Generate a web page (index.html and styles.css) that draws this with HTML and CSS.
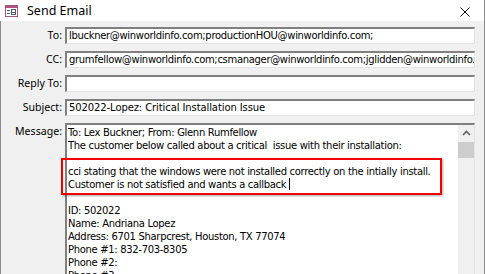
FILE: index.html
```html
<!DOCTYPE html>
<html>
<head>
<meta charset="utf-8">
<link rel="stylesheet" href="styles.css">
</head>
<body>
<div class="window">
  <div class="titlebar">
    <svg class="ticon" width="13" height="12" viewBox="0 0 13 12">
      <rect x="0.5" y="0.5" width="12" height="11" fill="#fff" stroke="#a0587c"/>
      <rect x="1" y="1" width="11" height="2" fill="#b4527e"/>
      <rect x="2" y="5" width="3" height="1" fill="#4a5a7a"/>
      <rect x="2" y="8" width="3" height="1" fill="#4a5a7a"/>
      <rect x="6.5" y="4.5" width="4" height="5" fill="#fff" stroke="#4a5a7a"/>
      <rect x="7" y="7" width="3" height="1" fill="#4a5a7a"/>
    </svg>
    <span class="ttext">Send Email</span>
    <svg class="close" width="10" height="10" viewBox="0 0 10 10">
      <path d="M0.5 0.5 L9.5 9.5 M9.5 0.5 L0.5 9.5" stroke="#111" stroke-width="1" fill="none"/>
    </svg>
  </div>
  <div class="body">
    <div class="form">
      <label class="lbl">To:</label>
      <div class="field">lbuckner@winworldinfo.com;productionHOU@winworldinfo.com;</div>
      <label class="lbl">CC:</label>
      <div class="field">grumfellow@winworldinfo.com;csmanager@winworldinfo.com;jglidden@winworldinfo.com</div>
      <label class="lbl">Reply To:</label>
      <div class="field"></div>
      <label class="lbl">Subject:</label>
      <div class="field subj">502022-Lopez: Critical Installation Issue</div>
      <label class="lbl">Message:</label>
      <div class="field msg">
        <div class="msgtext">
          <div class="ln">To: Lex Buckner; From: Glenn Rumfellow</div>
          <div class="ln">The customer below called about a critical&nbsp; issue with their installation:</div>
          <div class="ln">&nbsp;</div>
          <div class="ln">cci stating that the windows were not installed correctly on the intially install.</div>
          <div class="ln">Customer is not satisfied and wants a callback <span class="caret"></span></div>
          <div class="ln">&nbsp;</div>
          <div class="ln">ID: 502022</div>
          <div class="ln">Name: Andriana Lopez</div>
          <div class="ln">Address: 6701 Sharpcrest, Houston, TX 77074</div>
          <div class="ln">Phone #1: 832-703-8305</div>
          <div class="ln">Phone #2:</div>
          <div class="ln">Phone #3:</div>
        </div>
        <div class="scroll">
          <svg class="up" width="9" height="6" viewBox="0 0 9 6">
            <path d="M1 5 L4.5 1.5 L8 5" stroke="#606060" stroke-width="1.6" fill="none"/>
          </svg>
          <div class="thumb"></div>
        </div>
      </div>
    </div>
    <div class="highlight"></div>
  </div>
</div>
</body>
</html>
```
FILE: styles.css
```css
html, body {
  margin: 0;
  padding: 0;
  width: 485px;
  height: 274px;
  overflow: hidden;
  background: #f0f0f0;
}
.window {
  width: 485px;
  height: 274px;
  box-sizing: border-box;
  border-right: 1px solid #8a8a8a;
  display: flex;
  flex-direction: column;
  font-family: "Noto Sans", "Open Sans", sans-serif;
}
.titlebar {
  height: 21px;
  flex: none;
  background: #fff;
  display: flex;
  align-items: center;
  padding-left: 5px;
  padding-right: 14px;
}
.ticon { flex: none; margin-top: 1px; }
.ttext {
  margin-left: 9px;
  font-size: 12.5px;
  color: #000;
  flex: 1;
}
.close { flex: none; margin-top: 2px; }
.body {
  position: relative;
  flex: 1;
  border-left: 1px solid #8a8a8a;
  background: #f0f0f0;
  padding: 6px 9px 0 0;
  overflow: hidden;
}
.form {
  display: grid;
  grid-template-columns: 64px 410px;
  grid-auto-rows: 17px;
  row-gap: 7px;
}
.lbl {
  text-align: right;
  padding-right: 3px;
  font-size: 10.6px;
  line-height: 17px;
  color: #000;
}
.field {
  background: #fff;
  border-top: 2px solid #808080;
  border-left: 2px solid #808080;
  border-right: 1px solid #e3e3e3;
  border-bottom: 1px solid #e3e3e3;
  box-sizing: border-box;
  font-family: "DejaVu Sans", sans-serif;
  font-size: 10px;
  letter-spacing: -0.32px;
  line-height: 14px;
  padding-left: 2px;
  white-space: nowrap;
  overflow: hidden;
  color: #000;
}
.subj { letter-spacing: -0.1px; }
.msg {
  height: 200px;
  display: flex;
  padding-left: 1px;
  border-bottom: none;
}
.msgtext {
  flex: 1;
  padding-top: 1px;
  line-height: 13px;
  overflow: hidden;
}
.ln { white-space: nowrap; }
.caret {
  display: inline-block;
  width: 1px;
  height: 12px;
  background: #000;
  vertical-align: -2px;
}
.scroll {
  width: 16px;
  flex: none;
  background: #f0f0f0;
  display: flex;
  flex-direction: column;
  align-items: center;
}
.up { margin-top: 5px; }
.thumb {
  margin-top: 6px;
  width: 16px;
  height: 16px;
  background: #cdcdcd;
}
.highlight {
  position: absolute;
  left: 60px;
  top: 137px;
  width: 377px;
  height: 33px;
  border: 2px solid #f00000;
  box-shadow: 1px 1px 2px rgba(0,0,0,0.35);
}
```
